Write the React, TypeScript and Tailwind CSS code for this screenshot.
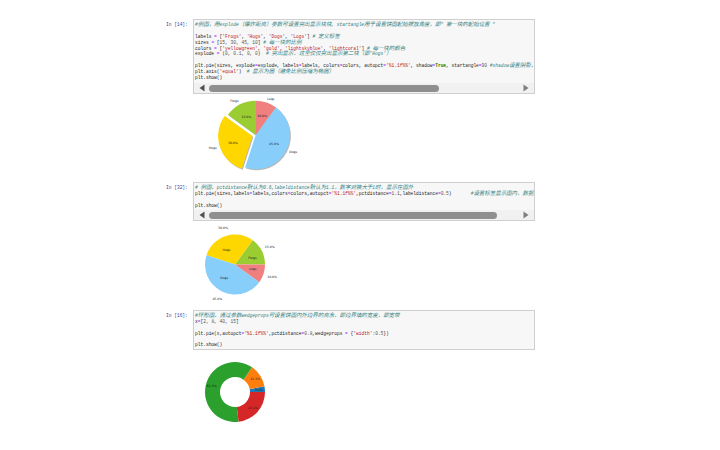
import React from "react";

type Seg = { t: string; c?: string };
const K = "text-[#008000] font-bold";
const S = "text-[#ba2121]";
const O = "text-[#aa22ff]";
const N = "text-[#555555]";
const C = "text-[#2f7f7f] italic";

const s = (t: string, c?: string): Seg => ({ t, c });

const cell1: Seg[][] = [
  [s('#例图，用explode（爆炸距离）参数可设置突出显示块块, startangle用于设置饼图起始摆放角度，即" 第一块的起始位置 "', C)],
  [],
  [s("labels "), s("=", O), s(" ["), s("'Frogs'", S), s(", "), s("'Hogs'", S), s(", "), s("'Dogs'", S), s(", "), s("'Logs'", S), s("] "), s("# 定义标签", C)],
  [s("sizes "), s("=", O), s(" ["), s("15, 30, 45, 10", N), s("] "), s("# 每一块的比例", C)],
  [s("colors "), s("=", O), s(" ["), s("'yellowgreen'", S), s(", "), s("'gold'", S), s(", "), s("'lightskyblue'", S), s(", "), s("'lightcoral'", S), s("] "), s("# 每一块的颜色", C)],
  [s("explode "), s("=", O), s(" ("), s("0, 0.1, 0, 0", N), s(")  "), s("# 突出显示，这里仅仅突出显示第二块（即'Hogs'）", C)],
  [],
  [s("plt.pie(sizes, explode"), s("=", O), s("explode, labels"), s("=", O), s("labels, colors"), s("=", O), s("colors, autopct"), s("=", O), s("'%1.1f%%'", S), s(", shadow"), s("=", O), s("True", K), s(", startangle"), s("=", O), s("90", N), s(" "), s("#shadow设置阴影，startangle设置起始角度", C)],
  [s("plt.axis("), s("'equal'", S), s(")  "), s("# 显示为圆（避免比例压缩为椭圆）", C)],
  [s("plt.show()")],
];

const cell2: Seg[][] = [
  [s("# 例图，pctdistance默认为0.6,labeldistance默认为1.1，数字对换大于1时，显示在图外", C)],
  [s("plt.pie(sizes,labels"), s("=", O), s("labels,colors"), s("=", O), s("colors,autopct"), s("=", O), s("'%1.1f%%'", S), s(",pctdistance"), s("=", O), s("1.1", N), s(",labeldistance"), s("=", O), s("0.5", N), s(")       "), s("#设置标签显示图内，数据显示图外，默认", C)],
  [],
  [s("plt.show()")],
];

const cell3: Seg[][] = [
  [s("#环形图，通过参数wedgeprops可设置饼图内外边界的离余，即边界填的宽度，即宽带", C)],
  [s("x"), s("=", O), s("["), s("2, 8, 40, 15", N), s("]")],
  [],
  [s("plt.pie(x,autopct"), s("=", O), s("'%1.1f%%'", S), s(",pctdistance"), s("=", O), s("0.8", N), s(",wedgeprops "), s("=", O), s(" {"), s("'width'", S), s(":"), s("0.5", N), s("})")],
  [],
  [s("plt.show()")],
];

// The reference's CJK glyphs are two Latin cells wide, so CJK runs get a larger size.
function Runs({ text }: { text: string }) {
  const parts = text.split(/([\u3000-\u9fff\uff00-\uffef]+)/);
  return (
    <>
      {parts.map((p, i) =>
        i % 2 === 1 ? (
          <span key={i} className="text-[5.46px]">
            {p}
          </span>
        ) : (
          <React.Fragment key={i}>{p}</React.Fragment>
        ),
      )}
    </>
  );
}

function Code({ lines }: { lines: Seg[][] }) {
  return (
    <div className="overflow-hidden whitespace-pre pl-[1px] pt-[2px] font-['Liberation_Mono','Noto_Sans_CJK_SC',monospace] text-[4.55px] leading-[5.9px] text-[#222222]">
      {lines.map((l, i) => (
        <div key={i} className="h-[5.9px]">
          {l.map((x, j) => (
            <span key={j} className={x.c}>
              <Runs text={x.t} />
            </span>
          ))}
        </div>
      ))}
    </div>
  );
}

function Scrollbar({ thumb }: { thumb: string }) {
  return (
    <div className="flex h-[10px] items-center bg-[#f1f1f1] px-[5px]">
      <svg width="6" height="8" viewBox="0 0 6 8" className="shrink-0">
        <path d="M5.5 0.5V7.5L0.5 4Z" fill="#505050" />
      </svg>
      <div className="ml-[4px] flex-1">
        <div className={`h-[7px] rounded-full bg-[#8f8f8f] ${thumb}`} />
      </div>
      <svg width="6" height="8" viewBox="0 0 6 8" className="ml-[4px] shrink-0">
        <path d="M0.5 0.5V7.5L5.5 4Z" fill="#7d7d7d" />
      </svg>
    </div>
  );
}

function Cell({ n, lines, thumb, h }: { n: string; lines: Seg[][]; thumb?: string; h: string }) {
  return (
    <div className="flex">
      <div className="w-[27px] shrink-0 pt-[3px] font-['Liberation_Mono','Noto_Sans_CJK_SC',monospace] text-[4.55px] leading-[5.9px] text-[#303f9f]">
        {n}
      </div>
      <div className={`flex w-[342px] flex-col justify-between overflow-hidden border border-[#cfcfcf] bg-[#f7f7f7] ${h}`}>
        <Code lines={lines} />
        {thumb && <Scrollbar thumb={thumb} />}
      </div>
    </div>
  );
}

const rad = (a: number) => (a * Math.PI) / 180;
function wedge(cx: number, cy: number, r: number, a0: number, a1: number, inner = 0) {
  const p = (rr: number, a: number) => `${(cx + rr * Math.cos(rad(a))).toFixed(2)} ${(cy - rr * Math.sin(rad(a))).toFixed(2)}`;
  const large = a1 - a0 > 180 ? 1 : 0;
  if (inner > 0) {
    return `M${p(r, a0)}A${r} ${r} 0 ${large} 0 ${p(r, a1)}L${p(inner, a1)}A${inner} ${inner} 0 ${large} 1 ${p(inner, a0)}Z`;
  }
  return `M${cx} ${cy}L${p(r, a0)}A${r} ${r} 0 ${large} 0 ${p(r, a1)}Z`;
}

type W = { v: number; color: string; label?: string; pct: string; explode?: number };

function Pie({
  w, h, cx, cy, r, start, data, labelD = 1.1, pctD = 0.6, inner = 0, shadow = false,
}: {
  w: number; h: number; cx: number; cy: number; r: number; start: number; data: W[];
  labelD?: number; pctD?: number; inner?: number; shadow?: boolean;
}) {
  const total = data.reduce((a, d) => a + d.v, 0);
  let a = start;
  const items = data.map((d) => {
    const a0 = a;
    const a1 = a + (d.v / total) * 360;
    a = a1;
    const m = (a0 + a1) / 2;
    const e = (d.explode ?? 0) * r;
    const ox = cx + e * Math.cos(rad(m));
    const oy = cy - e * Math.sin(rad(m));
    return { d, a0, a1, m, ox, oy };
  });
  return (
    <svg width={w} height={h} viewBox={`0 0 ${w} ${h}`} className="block font-['DejaVu_Sans',sans-serif] text-[3.1px]">
      {shadow &&
        items.map(({ a0, a1, ox, oy }, i) => (
          <path key={i} d={wedge(ox + 0.9, oy + 1, r, a0, a1)} fill="#000000" opacity="0.28" />
        ))}
      {items.map(({ d, a0, a1, ox, oy }, i) => (
        <path key={i} d={wedge(ox, oy, r, a0, a1, inner)} fill={d.color} />
      ))}
      {items.map(({ d, m, ox, oy }, i) => {
        const c = Math.cos(rad(m));
        const sn = Math.sin(rad(m));
        return (
          <g key={i} fill="#1a1a1a">
            {d.label && (
              <text x={ox + labelD * r * c} y={oy - labelD * r * sn + 1.1} textAnchor={c >= 0 ? "start" : "end"}>
                {d.label}
              </text>
            )}
            <text x={ox + pctD * r * c} y={oy - pctD * r * sn + 1.1} textAnchor="middle">
              {d.pct}
            </text>
          </g>
        );
      })}
    </svg>
  );
}

export default function App() {
  return (
    <div className="h-[450px] w-[720px] overflow-hidden bg-white pl-[166px] pt-[19px]">
      <Cell n="In [14]:" lines={cell1} thumb="w-[230px]" h="h-[75px]" />
      <div className="ml-[26px] h-[88px]">
        <Pie
          w={120} h={88} cx={63.7} cy={41} r={34.3} start={90} shadow
          data={[
            { v: 15, color: "#9acd32", label: "Frogs", pct: "15.0%" },
            { v: 30, color: "#ffd700", label: "Hogs", pct: "30.0%", explode: 0.1 },
            { v: 45, color: "#87cefa", label: "Dogs", pct: "45.0%" },
            { v: 10, color: "#f08080", label: "Logs", pct: "10.0%" },
          ]}
        />
      </div>
      <Cell n="In [32]:" lines={cell2} thumb="w-[288px]" h="h-[39px]" />
      <div className="ml-[7px] h-[89px]">
        <Pie
          w={120} h={89} cx={62} cy={43.5} r={30} start={0} labelD={0.5} pctD={1.3}
          data={[
            { v: 15, color: "#9acd32", label: "Frogs", pct: "15.0%" },
            { v: 30, color: "#ffd700", label: "Hogs", pct: "30.0%" },
            { v: 45, color: "#87cefa", label: "Dogs", pct: "45.0%" },
            { v: 10, color: "#f08080", label: "Logs", pct: "10.0%" },
          ]}
        />
      </div>
      <Cell n="In [16]:" lines={cell3} h="h-[40px]" />
      <div className="ml-[7px]">
        <Pie
          w={120} h={80} cx={62} cy={42} r={30} start={0} pctD={0.8} inner={15}
          data={[
            { v: 2, color: "#1f77b4", pct: "3.1%" },
            { v: 8, color: "#ff7f0e", pct: "12.3%" },
            { v: 40, color: "#2ca02c", pct: "61.5%" },
            { v: 15, color: "#d62728", pct: "23.1%" },
          ]}
        />
      </div>
    </div>
  );
}
